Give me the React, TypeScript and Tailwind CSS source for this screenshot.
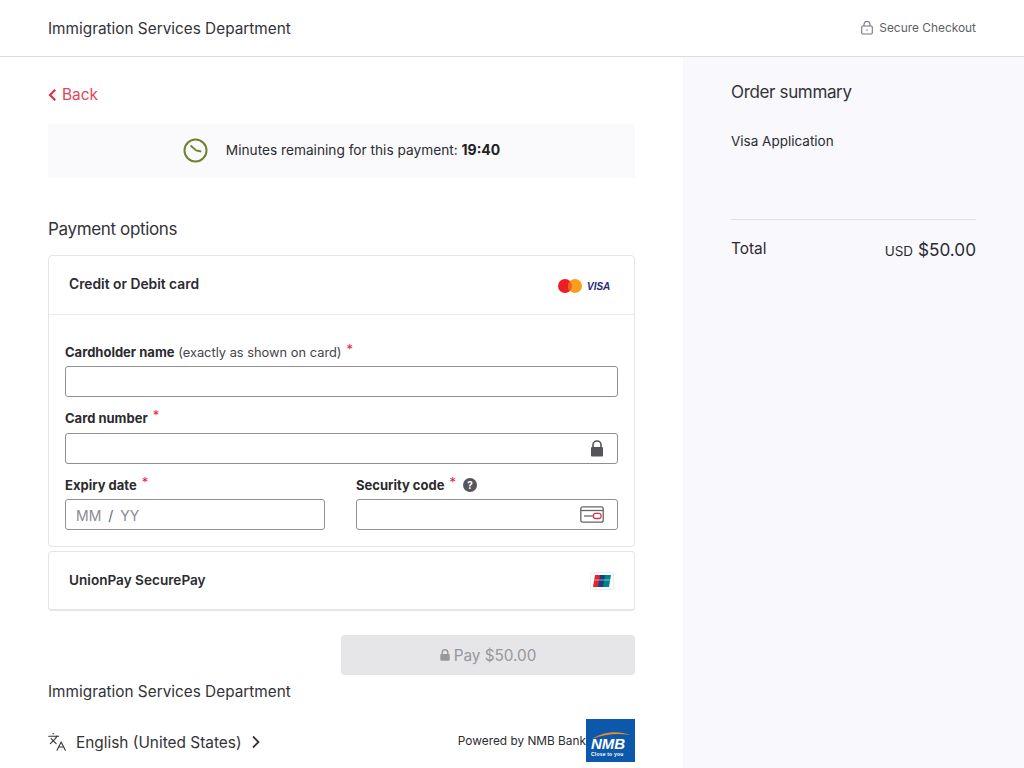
import React from "react";
import { Languages } from "lucide-react";

const font = { fontFamily: "Inter, sans-serif" };

function Req() {
  return <span className="text-[#e5243f] ml-[5px] relative top-[-3px] font-normal">*</span>;
}

function MasterVisa() {
  return (
    <svg width="54" height="18" viewBox="0 0 54 18">
      <circle cx="7" cy="10" r="7" fill="#ee1c25" />
      <circle cx="17" cy="10" r="7" fill="#f99f1b" />
      <path d="M12 5.100a7 7 0 0 1 0 9.800a7 7 0 0 1 0-9.800z" fill="#f26122" />
      <text x="29" y="13.500" fontFamily="Liberation Sans, sans-serif" fontStyle="italic" fontWeight="700" fontSize="10" fill="#1f2a7c">VISA</text>
    </svg>
  );
}

function UnionPay() {
  return (
    <svg width="24" height="18" viewBox="0 0 24 18">
      <rect x="0.5" y="0.5" width="23" height="17" rx="1.500" fill="#fbfbfd" stroke="#eeeef2" />
      <path d="M5 3h6l-2 12H3z" fill="#e2242f" />
      <path d="M10 3h6l-2 12H8z" fill="#1b3f7d" />
      <path d="M15 3h6l-2 12h-6z" fill="#00838a" />
      <path d="M4.500 7.500h16v1h-16z" fill="#fff" opacity="0.55" />
    </svg>
  );
}

function NmbLogo() {
  return (
    <div className="relative w-[49px] h-[43px] bg-[#0c59ac] shrink-0 overflow-hidden">
      <svg className="absolute left-0 top-0" width="49" height="43" viewBox="0 0 49 43">
        <path d="M6 20C16 13 32 11 44 16C33 14 18 15 6 20z" fill="#f08a24" />
      </svg>
      <span className="absolute left-[5px] top-[16px] text-white font-bold italic text-[15px] leading-[17px]" style={{ fontFamily: "Liberation Sans, sans-serif" }}>NMB</span>
      <span className="absolute left-[5px] top-[32px] text-white font-bold text-[5px] leading-[6px] tracking-[0.2px]" style={{ fontFamily: "Liberation Sans, sans-serif" }}>Close to you</span>
    </div>
  );
}

export default function App() {
  return (
    <div className="w-[1024px] h-[768px] overflow-hidden bg-white text-[#2b2b30] flex flex-col" style={font}>
      <header className="h-[57px] shrink-0 border-b border-[#dcdce0] flex items-center justify-between pl-[48px] pr-[48px]">
        <span className="text-[15.35px] text-[#333338] pt-[2px]">Immigration Services Department</span>
        <span className="flex items-center gap-[6px] text-[11.9px] text-[#5f5f66]">
          <svg width="12" height="14" viewBox="0 0 12 14" fill="none" stroke="#77777d" strokeWidth="1.100">
            <rect x="0.7" y="5" width="10.6" height="8" rx="1.200" />
            <path d="M3 5V3.400a3 3 0 0 1 6 0V5" />
            <circle cx="6" cy="9" r="0.800" fill="#77777d" stroke="none" />
          </svg>
          Secure Checkout
        </span>
      </header>

      <div className="flex flex-1 min-h-0">
        <main className="w-[683px] shrink-0 pl-[48px] pr-[48px]">
          <a className="flex items-center gap-[6px] text-[#e0455a] text-[15.4px] h-[24px] mt-[26px]">
            <svg width="8" height="12" viewBox="0 0 8 12" fill="none" stroke="#e0324c" strokeWidth="2.200" strokeLinecap="square">
              <path d="M6.500 1.500L2 6l4.500 4.500" />
            </svg>
            Back
          </a>

          <div className="h-[54px] mt-[17px] bg-[#fafafc] rounded-[2px] flex items-center justify-center gap-[18px] pb-[2px]">
            <svg width="25" height="25" viewBox="0 0 25 25" fill="none" stroke="#6f8230" strokeWidth="2">
              <circle cx="12.500" cy="12.500" r="11" />
              <path d="M7.500 7.500L13.200 12.500L18.200 13.500" strokeWidth="1.800" />
            </svg>
            <span className="text-[13.7px]">
              Minutes remaining for this payment: <b className="font-bold text-[#222226] text-[14px]">19:40</b>
            </span>
          </div>

          <h2 className="text-[17px] leading-[24px] mt-[39px] tracking-[-0.35px] text-[#333338]">Payment options</h2>

          <section className="mt-[14px] h-[292px] border border-[#e4e4e9] rounded-[4px] flex flex-col">
            <div className="h-[59px] shrink-0 border-b border-[#ececf0] flex items-center justify-between pl-[20px] pr-[22px]">
              <span className="text-[13.8px] font-semibold text-[#2b2b30] pb-[2px]">Credit or Debit card</span>
              <MasterVisa />
            </div>
            <div className="px-[16px] pt-[25px]">
              <label className="block text-[13px] leading-[24px] text-[#2b2b30]">
                <span className="font-bold">Cardholder name</span>{" "}
                <span className="text-[#44444a] text-[12.85px]">(exactly as shown on card)</span>
                <Req />
              </label>
              <div className="h-[31px] border border-[#8f8f94] rounded-[3px] mt-[1px]" />

              <label className="block text-[13px] leading-[24px] font-bold mt-[9px]">
                Card number<Req />
              </label>
              <div className="h-[31px] border border-[#8f8f94] rounded-[3px] mt-[3px] flex items-center justify-end pr-[13px]">
                <svg width="14" height="17" viewBox="0 0 14 17">
                  <path d="M3 8V5a4 4 0 0 1 8 0v3" fill="none" stroke="#55555a" strokeWidth="1.600" />
                  <rect x="1" y="7" width="12" height="9.500" rx="1" fill="#55555a" />
                </svg>
              </div>

              <div className="flex gap-[31px] mt-[9px]">
                <div className="w-[260px]">
                  <label className="block text-[13px] leading-[24px] font-bold">
                    Expiry date<Req />
                  </label>
                  <div className="h-[31px] border border-[#8f8f94] rounded-[3px] mt-[2px] flex items-center pl-[10px] pt-[1px] text-[14px] text-[#8b8b90]">
                    MM<span className="mx-[7px] text-[#66666b]">/</span>YY
                  </div>
                </div>
                <div className="flex-1">
                  <label className="flex items-center text-[13px] leading-[24px] font-bold">
                    Security code<Req />
                    <span className="ml-[7px] w-[14px] h-[14px] rounded-full bg-[#55555a] text-white text-[10px] leading-[14px] text-center font-bold">?</span>
                  </label>
                  <div className="h-[31px] border border-[#8f8f94] rounded-[3px] mt-[2px] flex items-center justify-end pr-[13px]">
                    <svg width="24" height="17" viewBox="0 0 24 17" fill="none">
                      <rect x="0.8" y="0.8" width="22.400" height="15.400" rx="2" stroke="#66666b" strokeWidth="1.300" />
                      <path d="M1 4.500H23" stroke="#66666b" strokeWidth="1.300" />
                      <path d="M4 10H14" stroke="#66666b" strokeWidth="1.300" />
                      <rect x="13.500" y="7.300" width="7.500" height="5.200" rx="2" stroke="#e0324c" strokeWidth="1.300" fill="#fff" />
                    </svg>
                  </div>
                </div>
              </div>
            </div>
          </section>

          <section className="mt-[4px] h-[60px] border border-[#e4e4e9] border-b-2 rounded-[4px] flex items-center justify-between pl-[20px] pr-[20px]">
            <span className="text-[13.6px] font-semibold text-[#2b2b30]">UnionPay SecurePay</span>
            <UnionPay />
          </section>

          <div className="flex justify-end mt-[24px]">
            <button className="w-[294px] h-[40px] bg-[#e6e5e8] rounded-[4px] flex items-center justify-center gap-[4px] text-[15.3px] text-[#97979c]">
              <svg width="10" height="12" viewBox="0 0 10 12" className="mb-[1px]">
                <path d="M2.200 5.500V3.600a2.800 2.800 0 0 1 5.600 0v1.900" fill="none" stroke="#97979c" strokeWidth="1.400" />
                <rect x="0.3" y="5" width="9.400" height="6.800" rx="1" fill="#97979c" />
              </svg>
              <span className="mt-[2px]">Pay $50.00</span>
            </button>
          </div>

          <div className="text-[15.35px] leading-[24px] mt-[5px] text-[#333338]">Immigration Services Department</div>

          <div className="flex items-center justify-between mt-[15px]">
            <div className="flex items-center text-[15.4px] text-[#333338] pt-[4px]">
              <Languages size={20} strokeWidth={1.300} color="#333338" className="mr-[9px] ml-[-1px]" />
              English (United States)
              <svg width="10" height="14" viewBox="0 0 10 14" fill="none" stroke="#333338" strokeWidth="1.800" className="ml-[9px]">
                <path d="M2 1.500L7.500 7L2 12.500" />
              </svg>
            </div>
            <div className="flex items-center gap-0">
              <span className="text-[11.85px] text-[#2b2b30] mt-[2px]">Powered by NMB Bank</span>
              <NmbLogo />
            </div>
          </div>
        </main>

        <aside className="flex-1 bg-[#f8f8fd] pl-[48px] pr-[48px]">
          <h2 className="text-[17px] leading-[24px] mt-[23px] tracking-[-0.35px] text-[#333338]">Order summary</h2>
          <p className="text-[13.5px] leading-[20px] mt-[27px] text-[#2b2b30]">Visa Application</p>
          <div className="border-t border-[#dedee3] mt-[68px] pt-[17px] flex items-start justify-between">
            <span className="text-[15.4px] leading-[24px]">Total</span>
            <span className="text-[17.2px] leading-[26px] text-[#2b2b30]"><span className="text-[13.5px]">USD</span> $50.00</span>
          </div>
        </aside>
      </div>
    </div>
  );
}
